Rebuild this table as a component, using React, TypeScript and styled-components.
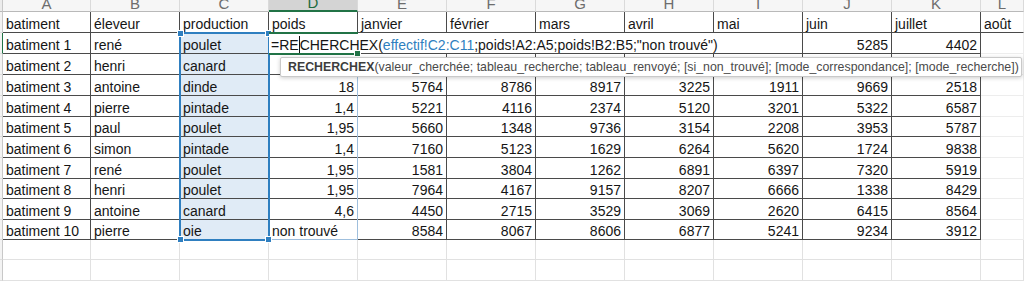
import React from 'react';
import styled, { createGlobalStyle } from 'styled-components';

const GlobalStyle = createGlobalStyle`
  html, body {
    margin: 0;
    padding: 0;
    background: #fff;
  }
  body {
    font-family: "Liberation Sans", Arial, sans-serif;
    overflow: hidden;
  }
`;

// heights of the visible rows: column letters, then rows 1..13
const ROW_HEIGHTS = [12, 21, 21, 21, 21, 21, 20, 21, 21, 20, 21, 20, 20, 21];

const LETTERS = ['A', 'B', 'C', 'D', 'E', 'F', 'G', 'H', 'I', 'J', 'K', 'L'];

const HEADER = ['batiment', 'éleveur', 'production', 'poids', 'janvier', 'février', 'mars', 'avril', 'mai', 'juin', 'juillet', 'août'];

const BODY: string[][] = [
  ['batiment 1', 'rené', 'poulet', '', '', '', '', '', '', '5285', '4402'],
  ['batiment 2', 'henri', 'canard', '', '', '', '', '', '', '', ''],
  ['batiment 3', 'antoine', 'dinde', '18', '5764', '8786', '8917', '3225', '1911', '9669', '2518'],
  ['batiment 4', 'pierre', 'pintade', '1,4', '5221', '4116', '2374', '5120', '3201', '5322', '6587'],
  ['batiment 5', 'paul', 'poulet', '1,95', '5660', '1348', '9736', '3154', '2208', '3953', '5787'],
  ['batiment 6', 'simon', 'pintade', '1,4', '7160', '5123', '1629', '6264', '5620', '1724', '9838'],
  ['batiment 7', 'rené', 'poulet', '1,95', '1581', '3804', '1262', '6891', '6397', '7320', '5919'],
  ['batiment 8', 'henri', 'poulet', '1,95', '7964', '4167', '9157', '8207', '6666', '1338', '8429'],
  ['batiment 9', 'antoine', 'canard', '4,6', '4450', '2715', '3529', '3069', '2620', '6415', '8564'],
  ['batiment 10', 'pierre', 'oie', 'non trouvé', '8584', '8067', '8606', '6877', '5241', '9234', '3912'],
];

const GREEN = '#217346';
const REF_BLUE = '#2f7fc0';

type Tone = 'table' | 'edge' | 'open';

const borderFor = (tone: Tone) =>
  tone === 'table' ? '#4a4a4a' : tone === 'edge' ? '#ededed' : '#e1e1e1';

const Sheet = styled.div`
  position: relative;
  display: grid;
  grid-template-columns: 3px 88px repeat(10, 89px) 1fr;
  grid-template-rows: ${ROW_HEIGHTS.map(h => `${h}px`).join(' ')};
  width: 1024px;
  height: 281px;
  overflow: hidden;
`;

const ColHead = styled.div<{ $col: number; $active?: boolean }>`
  grid-row: 1;
  grid-column: ${p => p.$col};
  box-sizing: border-box;
  display: flex;
  align-items: flex-end;
  justify-content: center;
  overflow: hidden;
  background: ${p => (p.$active ? '#d4d4d4' : '#f6f6f6')};
  border-right: 1px solid #dadada;
  border-bottom: ${p => (p.$active ? `2px solid ${GREEN}` : '1px solid #b9b9b9')};
  color: ${p => (p.$active ? '#1d6b3f' : '#6d6d6d')};
  font-size: 15px;
  line-height: 1;
`;

const Corner = styled.div`
  grid-row: 1;
  grid-column: 1;
  background: #ececec;
  border-bottom: 1px solid #b9b9b9;
  border-right: 1px solid #c8c8c8;
  box-sizing: border-box;
`;

const RowHead = styled.div<{ $row: number; $active?: boolean }>`
  grid-row: ${p => p.$row};
  grid-column: 1;
  box-sizing: border-box;
  background: #f3f3f3;
  border-right: 1px solid ${p => (p.$active ? GREEN : '#c8c8c8')};
  border-bottom: 1px solid #dedede;
`;

const Cell = styled.div<{ $row: number; $col: number; $tone: Tone; $num?: boolean; $hl?: boolean; $dark?: boolean }>`
  grid-row: ${p => p.$row};
  grid-column: ${p => p.$col};
  box-sizing: border-box;
  display: flex;
  align-items: center;
  justify-content: ${p => (p.$num ? 'flex-end' : 'flex-start')};
  padding: 3px 3px 0 3px;
  overflow: hidden;
  white-space: nowrap;
  font-size: 14px;
  color: #151515;
  background: ${p => (p.$hl ? '#e0ebf6' : '#fff')};
  border-right: 1px solid ${p => borderFor(p.$tone)};
  border-bottom: 1px solid ${p => (p.$dark ? '#4a4a4a' : borderFor(p.$tone))};
`;

const RefRange = styled.div`
  grid-row: 3 / 13;
  grid-column: 4;
  position: relative;
  margin: -1px -1px -1px -1px;
  border: 2px solid ${REF_BLUE};
  z-index: 3;
  pointer-events: none;
`;

const Handle = styled.span<{ $top: boolean; $left: boolean }>`
  position: absolute;
  width: 5px;
  height: 5px;
  background: ${REF_BLUE};
  border: 1px solid #fff;
  ${p => (p.$top ? 'top: -4px;' : 'bottom: -4px;')}
  ${p => (p.$left ? 'left: -4px;' : 'right: -4px;')}
`;

const SpillRange = styled.div`
  grid-row: 3 / 13;
  grid-column: 5;
  margin: -1px 0 0 -1px;
  border: 1px solid #9fbfdd;
  z-index: 2;
  pointer-events: none;
`;

const EditBox = styled.div`
  grid-row: 3;
  grid-column: 5 / 11;
  margin: 0 1px 1px 0;
  padding: 3px 0 0 2px;
  display: flex;
  align-items: center;
  background: #fff;
  z-index: 4;
  font-size: 14px;
  color: #151515;
  white-space: pre;
`;

const Caret = styled.span`
  display: inline-block;
  width: 1px;
  height: 17px;
  background: #111;
`;

const RefText = styled.span`
  color: ${REF_BLUE};
`;

const ActiveCell = styled.div`
  grid-row: 3;
  grid-column: 5;
  position: relative;
  margin: -1px 0 -1px 0;
  border-top: 2px solid ${GREEN};
  border-bottom: 2px solid ${GREEN};
  z-index: 5;
  pointer-events: none;
`;

const FillHandle = styled.span`
  position: absolute;
  right: -3px;
  bottom: -4px;
  width: 5px;
  height: 5px;
  background: ${GREEN};
  border: 1px solid #fff;
`;

const Tooltip = styled.div`
  position: absolute;
  left: 280px;
  top: 57px;
  width: 742px;
  height: 20px;
  box-sizing: border-box;
  display: flex;
  align-items: center;
  padding-left: 7px;
  background: #fff;
  border: 1px solid #c9c9c9;
  border-radius: 2px;
  box-shadow: 0 1px 4px rgba(0, 0, 0, 0.2);
  font-size: 12.35px;
  color: #4a4a4a;
  white-space: nowrap;
  z-index: 10;
`;

const FnName = styled.b`
  color: #3d3d3d;
`;

const isNum = (v: string) => /^[\d,]+$/.test(v);

export default function App() {
  const cells: React.ReactNode[] = [];

  // row 1: headers
  HEADER.forEach((h, i) => {
    const last = i === 11;
    cells.push(
      <Cell key={`h-${i}`} $row={2} $col={i + 2} $tone={last ? 'edge' : 'table'} $dark>
        {h}
      </Cell>
    );
  });

  // rows 2..11
  BODY.forEach((row, r) => {
    for (let c = 0; c < 12; c++) {
      const v = row[c] ?? '';
      const last = c === 11;
      cells.push(
        <Cell
          key={`b-${r}-${c}`}
          $row={r + 3}
          $col={c + 2}
          $tone={last ? 'edge' : 'table'}
          $num={isNum(v)}
          $hl={c === 2}
        >
          {v}
        </Cell>
      );
    }
  });

  // rows 12, 13: empty grid
  [13, 14].forEach(gr => {
    for (let c = 0; c < 12; c++) {
      cells.push(<Cell key={`e-${gr}-${c}`} $row={gr} $col={c + 2} $tone="open" />);
    }
  });

  return (
    <>
      <GlobalStyle />
      <Sheet>
        <Corner />
        {LETTERS.map((l, i) => (
          <ColHead key={l} $col={i + 2} $active={l === 'D'}>
            {l}
          </ColHead>
        ))}
        {ROW_HEIGHTS.slice(1).map((_, i) => (
          <RowHead key={i} $row={i + 2} $active={i === 1} />
        ))}
        {cells}

        <SpillRange />
        <RefRange>
          <Handle $top $left />
          <Handle $top $left={false} />
          <Handle $top={false} $left />
          <Handle $top={false} $left={false} />
        </RefRange>

        <EditBox>
          =RE<Caret />CHERCHEX(<RefText>effectif!C2:C11</RefText>;poids!A2:A5;poids!B2:B5;"non trouvé")
        </EditBox>
        <ActiveCell>
          <FillHandle />
        </ActiveCell>

        <Tooltip>
          <FnName>RECHERCHEX</FnName>
          (valeur_cherchée; tableau_recherche; tableau_renvoyé; [si_non_trouvé]; [mode_correspondance]; [mode_recherche])
        </Tooltip>
      </Sheet>
    </>
  );
}
